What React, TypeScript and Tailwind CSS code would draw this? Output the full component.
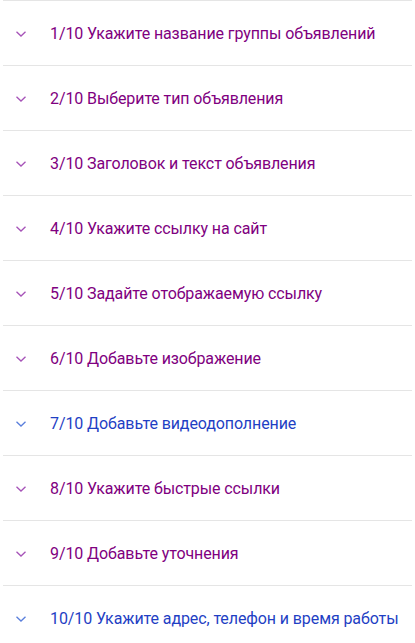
const steps = [
  { text: "1/10 Укажите название группы объявлений", visited: true },
  { text: "2/10 Выберите тип объявления", visited: true },
  { text: "3/10 Заголовок и текст объявления", visited: true },
  { text: "4/10 Укажите ссылку на сайт", visited: true },
  { text: "5/10 Задайте отображаемую ссылку", visited: true },
  { text: "6/10 Добавьте изображение", visited: true },
  { text: "7/10 Добавьте видеодополнение", visited: false },
  { text: "8/10 Укажите быстрые ссылки", visited: true },
  { text: "9/10 Добавьте уточнения", visited: true },
  { text: "10/10 Укажите адрес, телефон и время работы", visited: false },
];

const Chevron = ({ color }: { color: string }) => (
  <svg width="10" height="6" viewBox="0 0 10 6" fill="none">
    <path d="M0.5 0.7L5 5L9.5 0.7" stroke={color} strokeWidth="1.3" />
  </svg>
);

export default function App() {
  return (
    <div
      className="w-[415px] h-[643px] bg-white overflow-hidden"
      style={{ fontFamily: "Roboto, 'Noto Sans', Arial, sans-serif" }}
    >
      <div className="mx-[3px]">
        {steps.map((s) => (
          <div
            key={s.text}
            className="h-[65px] border-t border-[#e5e5e5] flex items-center pt-[2px]"
          >
            <span className="ml-[13px] mr-[24px] flex">
              <Chevron color={s.visited ? "#a653b8" : "#5a7fdc"} />
            </span>
            <span
              className={`text-[16px] tracking-[-0.1px] ${
                s.visited ? "text-[#800080]" : "text-[#1f3fc4]"
              }`}
            >
              {s.text}
            </span>
          </div>
        ))}
      </div>
    </div>
  );
}
